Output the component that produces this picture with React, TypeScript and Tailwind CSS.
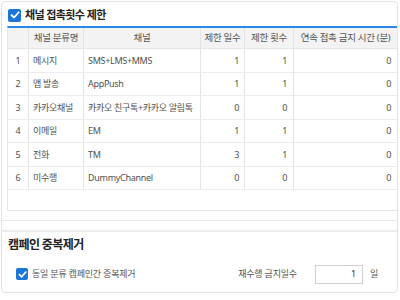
import React from "react";

const rows = [
  { no: 1, cat: "메시지", ch: "SMS+LMS+MMS", d: 1, c: 1, t: 0 },
  { no: 2, cat: "앱 발송", ch: "AppPush", d: 1, c: 1, t: 0 },
  { no: 3, cat: "카카오채널", ch: "카카오 친구톡+카카오 알림톡", d: 0, c: 0, t: 0 },
  { no: 4, cat: "이메일", ch: "EM", d: 1, c: 1, t: 0 },
  { no: 5, cat: "전화", ch: "TM", d: 3, c: 1, t: 0 },
  { no: 6, cat: "미수행", ch: "DummyChannel", d: 0, c: 0, t: 0 },
];

function Check({ size = 13 }: { size?: number }) {
  return (
    <span
      className="inline-flex items-center justify-center rounded-[2px] bg-[#1b76d8] shrink-0"
      style={{ width: size, height: size }}
    >
      <svg width={size - 3} height={size - 3} viewBox="0 0 10 10">
        <path d="M1.6 5.2 L4 7.5 L8.6 2.4" fill="none" stroke="#fff" strokeWidth="1.8" strokeLinecap="square" />
      </svg>
    </span>
  );
}

const cellB = "border-r border-[#e4e4e4] h-full flex items-center whitespace-nowrap overflow-hidden";

export default function App() {
  return (
    <div
      className="w-[400px] h-[300px] bg-white pl-[1px] pt-[1px] overflow-hidden"
      style={{ fontFamily: '"Noto Sans", "Noto Sans CJK KR", sans-serif' }}
    >
      <div className="w-[397px] h-[292px] border border-[#e2e2e2] rounded-[4px] overflow-hidden flex flex-col bg-white">
        {/* section 1 */}
        <div className="border-b border-[#e8e8e8] pb-[9px]">
          <div className="h-[24px] flex items-center gap-[4px] pl-[6px] pt-[2px]">
            <Check />
            <span className="text-[11px] font-bold text-[#222] tracking-[-0.6px]">채널 접촉횟수 제한</span>
          </div>
          <div className="ml-[5px] w-[420px] h-[185px] border-t-2 border-[#2b86e6] border-l border-b border-l-[#e4e4e4] border-b-[#e4e4e4] text-[9px] tracking-[-0.3px] text-[#505050]">
            <div className="flex h-[21px] bg-[#f3f3f3] border-b border-[#e4e4e4] text-[#555] text-[9.5px] tracking-[-0.3px]">
              <div className={`${cellB} w-[21px]`}></div>
              <div className={`${cellB} w-[55px] justify-center`}>채널 분류명</div>
              <div className={`${cellB} w-[117px] justify-center`}>채널</div>
              <div className={`${cellB} w-[44px] justify-center`}>제한 일수</div>
              <div className={`${cellB} w-[49px] justify-center`}>제한 횟수</div>
              <div className={`${cellB} w-[104px] justify-center`}>연속 접촉 금지 시간 (분)</div>
              <div className="flex-1"></div>
            </div>
            {rows.map((r) => (
              <div key={r.no} className="flex h-[23.5px] border-b border-[#ececec]">
                <div className={`${cellB} w-[21px] justify-center`}>{r.no}</div>
                <div className={`${cellB} w-[55px] pl-[4px]`}>{r.cat}</div>
                <div className={`${cellB} w-[117px] pl-[4px]`}>{r.ch}</div>
                <div className={`${cellB} w-[44px] justify-end pr-[5px]`}>{r.d}</div>
                <div className={`${cellB} w-[49px] justify-end pr-[6px]`}>{r.c}</div>
                <div className={`${cellB} w-[104px] justify-end pr-[6px]`}>{r.t}</div>
                <div className="flex-1"></div>
              </div>
            ))}
          </div>
        </div>
        {/* section 2 */}
        <div className="mt-[9px] border-t-2 border-[#ececec] flex-1 flex flex-col">
          <div className="h-[24px] flex items-center pl-[6px] pt-[2px]">
            <span className="text-[12px] font-bold text-[#222] tracking-[-0.6px]">캠페인 중복제거</span>
          </div>
          <div className="flex items-center h-[36px] pl-[14px] pr-[19px] text-[9px] tracking-[-0.2px] text-[#555]">
            <Check size={12} />
            <span className="ml-[4px]">동일 분류 캠페인간 중복제거</span>
            <span className="ml-auto">재수행 금지일수</span>
            <div className="ml-[18px] w-[48px] h-[19px] border border-[#cfcfcf] flex items-center justify-end pr-[6px] text-[#333] text-[9px]">1</div>
            <span className="ml-[7px]">일</span>
          </div>
        </div>
      </div>
    </div>
  );
}
